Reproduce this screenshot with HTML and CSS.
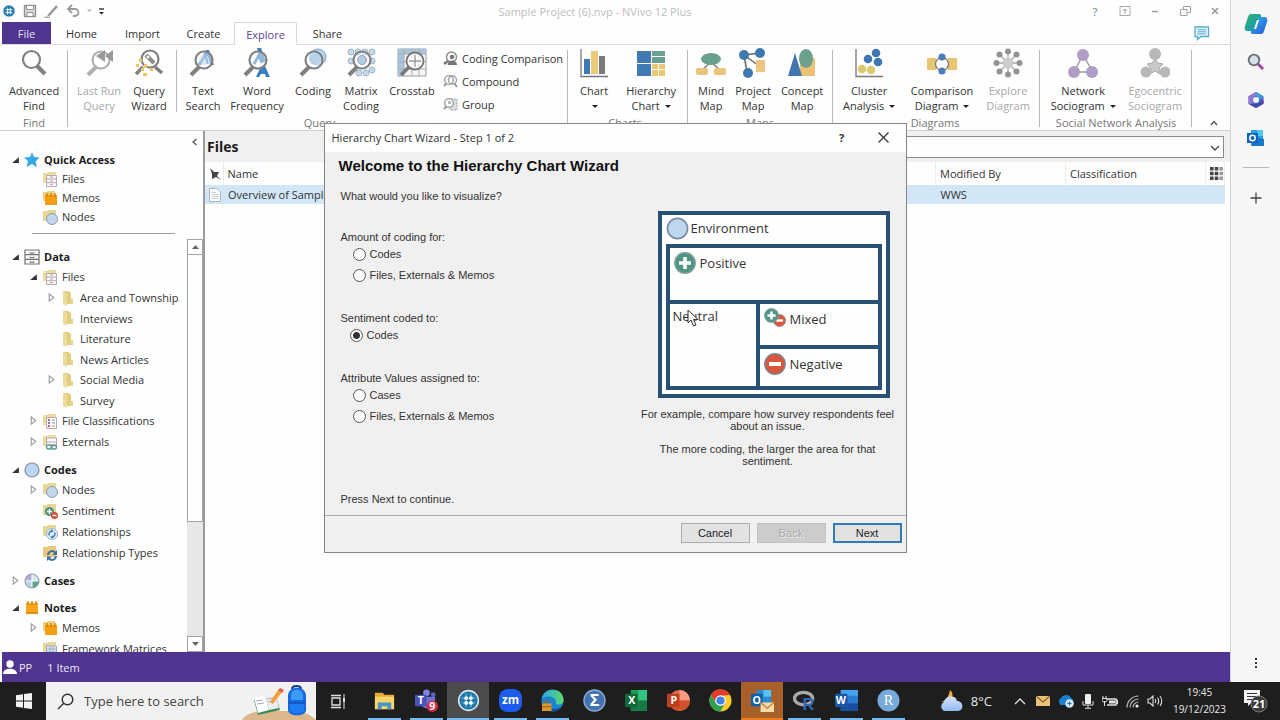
FILE: index.html
```
<!DOCTYPE html>
<html lang="en">
<head>
<meta charset="utf-8">
<title>Sample Project (6).nvp - NVivo 12 Plus</title>
<link rel="stylesheet" href="styles.css">
</head>
<body>
<svg class="sprite" aria-hidden="true">
  <defs>
    <linearGradient id="g-teal" x1="0" y1="0" x2="1" y2="1"><stop offset="0" stop-color="#2fb36a"/><stop offset="1" stop-color="#1593c8"/></linearGradient>
    <linearGradient id="g-blue" x1="0" y1="0" x2="1" y2="1"><stop offset="0" stop-color="#2fc0f0"/><stop offset="1" stop-color="#2a50d8"/></linearGradient>
    <linearGradient id="g-edge" x1="0" y1="0" x2="1" y2="0"><stop offset="0" stop-color="#2ba8e8"/><stop offset="1" stop-color="#5bd86a"/></linearGradient>
    <linearGradient id="g-cloud" x1="0" y1="0" x2="0" y2="1"><stop offset="0" stop-color="#d4e4fb"/><stop offset="1" stop-color="#93b8ee"/></linearGradient>
  </defs>
  <symbol id="lens" viewBox="0 0 30 30"><path d="M18 18 26 26" stroke="#808080" stroke-width="4"/><circle cx="12.500" cy="11.500" r="8.500" fill="none" stroke="#808080" stroke-width="2.200"/></symbol>
  <symbol id="lens-left" viewBox="0 0 30 30"><path d="M11 19 3 27" stroke="#808080" stroke-width="4"/><circle cx="16" cy="12" r="8.500" fill="#fff" fill-opacity=".45" stroke="#808080" stroke-width="2.200"/></symbol>
  <symbol id="caret-open" viewBox="0 0 8 8"><path d="M7 2V7H1Z" fill="#333"/></symbol>
  <symbol id="caret-closed" viewBox="0 0 8 8"><path d="M2 .8 6 4 2 7.200Z" fill="#fff" stroke="#9a9a9a"/></symbol>
  <symbol id="folder" viewBox="0 0 16 16"><path d="M3 1h5l3 2v11H8l-5-1Z" fill="#e2cd7c"/><path d="M3 1l4 2v13l-4-2Z" fill="#ecdc9b"/><path d="M10 9h3v5h-3Z" fill="#e8d58c"/></symbol>
  <symbol id="cabinet" viewBox="0 0 16 16"><path d="M1 1h14v14H1ZM1 5.700h14M1 10.300h14" fill="#fff" stroke="#707070" stroke-width="1.200"/><path d="M6 3v1.200h4V3M6 7.500v1.200h4V7.500M6 12v1.200h4V12" fill="none" stroke="#707070"/></symbol>
  <symbol id="f-cabinet" viewBox="0 0 16 16"><path d="M1 2h4l1-1h8v11H1Z" fill="#eddc9f"/><path d="M4.500 4.500h10v11h-10ZM4.500 8h10M4.500 11.700h10" fill="#faf7f8" stroke="#b7a9b2"/><path d="M8 6h3M8 10h3M8 13.500h3" stroke="#b7a9b2"/></symbol>
  <symbol id="f-class" viewBox="0 0 16 16"><path d="M1 2h4l1-1h8v11H1Z" fill="#eddc9f"/><path d="M4.500 4.500h10v11h-10Z" fill="#fbf8fa" stroke="#b7a9b2"/><path d="M6 7h2M6 13h2" stroke="#c060a0" stroke-width="2"/><path d="M6 10h2" stroke="#52a080" stroke-width="2"/><path d="M10 7h3M10 10h3M10 13h3" stroke="#a89aa8"/></symbol>
  <symbol id="f-ext" viewBox="0 0 16 16"><path d="M1 2h4l1-1h8v11H1Z" fill="#eddc9f"/><path d="M4.500 4h10v8h-10ZM4.500 8h10" fill="#fbf8fa" stroke="#b7a9b2"/><rect x="4.500" y="11" width="5.500" height="4" rx="2" fill="#fff" stroke="#5a9a90" stroke-width="1.300"/><rect x="9" y="11" width="5.500" height="4" rx="2" fill="none" stroke="#5a9a90" stroke-width="1.300"/></symbol>
  <symbol id="pad" viewBox="0 0 16 16"><path d="M2 3h12v11H2Z" fill="#f6a71c"/><path d="M2 12h12v2H2Z" fill="#e28d0a"/><path d="M4 1v4M8 1v4M12 1v4" stroke="#d88a10" stroke-width="1.500"/></symbol>
  <symbol id="f-pad" viewBox="0 0 16 16"><path d="M1 2h4l1-1h7v10H1Z" fill="#f0d07c"/><path d="M3 5h12v10H3Z" fill="#f49f13"/><path d="M5 3v4M9 3v4M13 3v4" stroke="#cf830c" stroke-width="1.400"/></symbol>
  <symbol id="node" viewBox="0 0 16 16"><circle cx="8" cy="8" r="7" fill="#bfd7ee" stroke="#7d8fa6" stroke-width="1.200"/></symbol>
  <symbol id="f-node" viewBox="0 0 16 16"><path d="M1 2h4l1-1h8v11H1Z" fill="#e8d694"/><circle cx="10" cy="10" r="5.500" fill="#c3d7ec" stroke="#8a9cb4"/></symbol>
  <symbol id="f-matrix" viewBox="0 0 16 16"><path d="M1 2h4l1-1h8v11H1Z" fill="#e8d694"/><path d="M4.500 5h10v9h-10ZM4.500 8h10M4.500 11h10M8 5v9M11 5v9" fill="#dbe6f0" stroke="#9fb0c4"/></symbol>
  <symbol id="f-sent" viewBox="0 0 16 16"><path d="M1 2h4l1-1h8v11H1Z" fill="#e8d694"/><circle cx="7.500" cy="8.500" r="4.500" fill="#4f9482"/><path d="M5 8.500h5M7.500 6v5" stroke="#fff" stroke-width="1.400"/><circle cx="12.500" cy="12.500" r="3.500" fill="#d6503c"/><path d="M10.500 12.500h4" stroke="#fff" stroke-width="1.400"/></symbol>
  <symbol id="f-rel" viewBox="0 0 16 16"><path d="M1 2h4l1-1h8v11H1Z" fill="#e8d694"/><circle cx="10" cy="10" r="5.500" fill="#e8f2fa" stroke="#8cb2d2"/><path d="M7.500 11.500a3 3 0 0 1 2-4.500M12.500 8.500a3 3 0 0 1-2 4.500" fill="none" stroke="#3c82b8" stroke-width="1.500"/><path d="M9 5.200l3 1.800-3 1.800ZM11 11.200v3.600L8 13Z" fill="#3c82b8"/></symbol>
  <symbol id="f-relt" viewBox="0 0 16 16"><path d="M1 2h4l1-1h8v11H1Z" fill="#e8c97c"/><path d="M6 10a4 4 0 0 1 7-2.500M14 11a4 4 0 0 1-7 2.500" fill="none" stroke="#3b6ea8" stroke-width="2"/><path d="M15 5v5h-4.500ZM5 16v-4.500h4.500Z" fill="#3b6ea8"/></symbol>
  <symbol id="case" viewBox="0 0 16 16"><circle cx="8" cy="8" r="7" fill="#fff"/><path d="M8 8V1a7 7 0 0 0-7 7Z" fill="#b8acd8"/><path d="M8 8V1a7 7 0 0 1 7 7Z" fill="#d8e6ee"/><path d="M8 8H1a7 7 0 0 0 7 7Z" fill="#b9d2ea"/><path d="M8 8h7a7 7 0 0 1-7 7Z" fill="#5da58c"/><path d="M8 1v14M1 8h14" stroke="#fff"/><circle cx="8" cy="8" r="7" fill="none" stroke="#7d8fa6"/></symbol>
  <symbol id="plus-disc" viewBox="0 0 22 22"><circle cx="11" cy="11" r="10.200" fill="#519684" stroke="#7b9f99" stroke-width="1.400"/><path d="M5 11h12M11 5v12" stroke="#fff" stroke-width="3.600"/></symbol>
  <symbol id="minus-disc" viewBox="0 0 22 22"><circle cx="11" cy="11" r="10.200" fill="#d9583b" stroke="#7d8497" stroke-width="1.400"/><path d="M5 11h12" stroke="#fff" stroke-width="4"/></symbol>
  <symbol id="nvivo" viewBox="0 0 24 24"><circle cx="12" cy="12" r="10.300" fill="#2377a8" stroke="#d3e6f1" stroke-width="1.600"/><path d="M5 9.500h14M5 14.500h14M9.500 5v14M14.500 5v14" stroke="#5bb0dc" stroke-width="1.500"/><g fill="#fff"><circle cx="9.500" cy="9.500" r="2"/><circle cx="14.500" cy="9.500" r="2"/><circle cx="9.500" cy="14.500" r="2"/><circle cx="14.500" cy="14.500" r="2"/></g></symbol>
</svg>

<div class="desktop">
  <div class="app">
    <header class="titlebar">
      <div class="quick">
        <svg width="14" height="14"><use href="#nvivo"/></svg>
        <svg width="14" height="14" viewBox="0 0 14 14"><path d="M1.500 1.500h11v11h-11Z" fill="#ddd" stroke="#929292" stroke-width="1.400"/><path d="M3.500 1.500h7v4h-7ZM4 8.500h6v4H4Z" fill="#fff" stroke="#929292"/></svg>
        <svg width="15" height="14" viewBox="0 0 15 14"><path d="M0 13.300h6" stroke="#9a9a9a"/><path d="M5 11 13 2" stroke="#999" stroke-width="2.600"/><path d="M3 13l1-3 2 1.500Z" fill="#999"/></svg>
        <svg width="14" height="14" viewBox="0 0 14 14"><path d="M2 5h7a3.500 3.500 0 0 1 0 7H7" fill="none" stroke="#999" stroke-width="1.800"/><path d="M6 1 2 5l4 4" fill="none" stroke="#999" stroke-width="1.800"/></svg>
        <svg width="5" height="4" viewBox="0 0 5 4"><path d="M0 .5h5L2.500 3Z" fill="#b5b5b5"/></svg>
        <svg width="5" height="7" viewBox="0 0 5 7"><path d="M0 1h5" stroke="#333" stroke-width="1.400"/><path d="M0 4h5L2.500 6.500Z" fill="#222"/></svg>
      </div>
      <div class="title">Sample Project (6).nvp - NVivo 12 Plus</div>
      <div class="controls">
        <button aria-label="Help">?</button>
        <button aria-label="Ribbon options"><svg width="12" height="10" viewBox="0 0 12 10"><path d="M1 .5h10v9H1ZM6 8V3M4 5l2-2 2 2" fill="none" stroke="#a8a8a8"/></svg></button>
        <button aria-label="Minimise"><svg width="8" height="8" viewBox="0 0 8 8"><path d="M1 4.500h6" stroke="#999" stroke-width="1.400"/></svg></button>
        <button aria-label="Restore"><svg width="11" height="10" viewBox="0 0 11 10"><path d="M.5 3.500h6.500v6H.5ZM3.500 3V.5h7v6H7.500" fill="none" stroke="#a4a4a4"/></svg></button>
        <button aria-label="Close"><svg width="8" height="8" viewBox="0 0 8 8"><path d="M1 1l6 6M7 1 1 7" stroke="#999" stroke-width="1.500"/></svg></button>
      </div>
    </header>

    <nav class="tabs">
      <button class="tab file">File</button>
      <button class="tab">Home</button>
      <button class="tab">Import</button>
      <button class="tab">Create</button>
      <button class="tab active">Explore</button>
      <button class="tab">Share</button>
      <button class="comment" aria-label="Feedback"><svg width="16" height="15" viewBox="0 0 16 15"><path d="M1 1h13.500v9.500H7L3.500 13.500v-3H1Z" fill="#e6f4fa" stroke="#5aa9cc" stroke-width="1.300"/><path d="M3.500 3.700h8.500M3.500 5.800h8.500M3.500 7.900h8.500" stroke="#5aa9cc"/></svg></button>
    </nav>

    <section class="ribbon">
      <div class="group">
        <div class="tools">
          <button class="tool w64"><svg><use href="#lens"/></svg><span>Advanced<br>Find</span></button>
        </div>
        <div class="caption">Find</div>
      </div>
      <div class="group query">
        <div class="tools">
          <button class="tool w52" disabled><svg viewBox="0 0 30 30"><path d="M13 18 4 27" stroke="#b0b0b0" stroke-width="4"/><circle cx="17" cy="12" r="8.500" fill="#fff" stroke="#b0b0b0" stroke-width="2.200"/><path d="M21 2v12l-9-6ZM29 2v12l-8-6Z" fill="#999"/></svg><span>Last Run<br>Query</span></button>
          <button class="tool w48"><svg viewBox="0 0 30 30"><path d="M21 19l7 6M9 19 2 26" stroke="#808080" stroke-width="3.500"/><circle cx="16" cy="11" r="8.500" fill="#fff" stroke="#808080" stroke-width="2.200"/><path d="M12 7l8 8" stroke="#8c8c8c" stroke-width="4"/><path d="M13 8l2 2" stroke="#fff" stroke-width="2"/><g fill="#e7c75e"><path d="M5 11h3v3H5ZM2 16h3v3H2ZM10 16h3v4h-3ZM16 20h3v3h-3ZM9 25h4v3H9ZM7 20h3v3H7Z"/></g></svg><span>Query<br>Wizard</span></button>
          <i class="split"></i>
          <button class="tool w44"><svg viewBox="0 0 30 30"><path d="M9 17 18 2h3l5 15h-4l-1-4h-6l-2 4Z" fill="#3b7fbd"/><circle cx="16" cy="12" r="5" fill="#b9d3ea"/><path d="M12 16 17 7l3 9" fill="none" stroke="#3b7fbd" stroke-width="2"/><use href="#lens-left"/></svg><span>Text<br>Search</span></button>
          <button class="tool w64"><svg viewBox="0 0 30 30"><path d="M15 0h4l5 14h-4Z" fill="#3b7fbd"/><path d="M14 29 19 18h4l5 11h-4l-1-3h-4l-2 3Z" fill="#3b7fbd"/><path d="M12 16 17 7l3 8" fill="none" stroke="#3b7fbd" stroke-width="3"/><use href="#lens-left"/></svg><span>Word<br>Frequency</span></button>
          <button class="tool w48"><svg viewBox="0 0 30 30"><circle cx="20" cy="9" r="8" fill="#bcd4eb" stroke="#7ba6cf"/><use href="#lens-left"/><circle cx="17" cy="11" r="6" fill="#a9c8e5" fill-opacity=".7"/></svg><span>Coding</span></button>
          <button class="tool w48"><svg viewBox="0 0 30 30"><g fill="#c9d9e8" stroke="#9db3ca"><circle cx="5" cy="4" r="3"/><circle cx="12" cy="4" r="3"/><circle cx="19" cy="4" r="3"/><circle cx="26" cy="4" r="3"/><circle cx="5" cy="13" r="3"/><circle cx="26" cy="13" r="3"/><circle cx="13" cy="25" r="3"/><circle cx="20" cy="25" r="3"/><circle cx="26" cy="22" r="3"/></g><use href="#lens-left"/><circle cx="16" cy="12" r="4.500" fill="#b5cce1" stroke="#8aa4bf"/></svg><span>Matrix<br>Coding</span></button>
          <button class="tool w54"><svg viewBox="0 0 30 30"><path d="M1 1h28v27H1Z" fill="#f4f6f7" stroke="#9a9a9a"/><path d="M1 1h6v27H1ZM1 1h28v5H1Z" fill="#a9c4dc"/><path d="M7 1v27M15 1v27M22 1v27M1 6h28M1 14h28M1 21h28" stroke="#a4adb5"/><path d="M12 19 4 27" stroke="#777" stroke-width="3.500"/><circle cx="18" cy="13" r="8.500" fill="#fff" fill-opacity=".8" stroke="#777" stroke-width="1.800"/><path d="M18 7v12M12 13h12" stroke="#777"/></svg><span>Crosstab</span></button>
          <div class="stack">
            <button class="mini"><svg viewBox="0 0 15 15"><path d="M6 9 1 13" stroke="#777" stroke-width="2.400"/><circle cx="8.500" cy="6" r="5" fill="#fff" stroke="#8c8c8c" stroke-width="1.500"/><circle cx="9" cy="6" r="2.300" fill="#777"/><path d="M4.500 14c0-6 9.500-6 9.500 0Z" fill="#777"/></svg>Coding Comparison</button>
            <button class="mini"><svg viewBox="0 0 15 15"><path d="M4 9 1 12" stroke="#999" stroke-width="2"/><path d="M11 9l3 4" stroke="#999" stroke-width="2"/><circle cx="6" cy="6" r="4.300" fill="#fff" stroke="#999" stroke-width="1.300"/><circle cx="9.500" cy="6" r="4" fill="none" stroke="#999" stroke-width="1.300"/></svg>Compound</button>
            <button class="mini"><svg viewBox="0 0 15 15"><path d="M8 2h6v11H7Z" fill="#ddd" stroke="#aaa" stroke-dasharray="2 1"/><path d="M4 9 1 12" stroke="#999" stroke-width="2"/><circle cx="6" cy="6" r="4.300" fill="#fff" stroke="#999" stroke-width="1.300"/><path d="M5 4h3v3H5Z" fill="#bbb"/></svg>Group</button>
          </div>
        </div>
        <div class="caption">Query</div>
      </div>
      <div class="group charts">
        <div class="tools">
          <button class="tool w52"><svg viewBox="0 0 30 30"><path d="M2 1v27.500h27" fill="none" stroke="#777" stroke-width="1.300"/><path d="M5 11h6v15H5Z" fill="#3d7ab5"/><path d="M12 3h7v23h-7Z" fill="#ebcb78"/><path d="M20 8h6v18h-6Z" fill="#7a7a7a"/></svg><span>Chart<br><i class="down"></i></span></button>
          <button class="tool w62"><svg viewBox="0 0 30 30"><path d="M1 3h14v12H1ZM1 16h14v12H1Z" fill="#4179b3"/><path d="M16 3h13v5H16ZM16 9h13v6H16Z" fill="#6aa18d"/><path d="M16 16h6v5h-6ZM23 16h6v5h-6ZM16 22h6v6h-6ZM23 22h6v6h-6Z" fill="#ebc673"/></svg><span>Hierarchy<br>Chart <i class="down"></i></span></button>
        </div>
        <div class="caption">Charts</div>
      </div>
      <div class="group maps">
        <div class="tools">
          <button class="tool w42"><svg viewBox="0 0 30 30"><path d="M15 14 6 22M15 14l9 8" stroke="#777" stroke-width="1.300"/><ellipse cx="15" cy="11" rx="10" ry="6" fill="#69a08d"/><rect x="0" y="20" width="12" height="7" rx="2" fill="#ebc47c"/><rect x="18" y="20" width="12" height="7" rx="2" fill="#ebc47c"/></svg><span>Mind<br>Map</span></button>
          <button class="tool w42"><svg viewBox="0 0 30 30"><path d="M6 7 22 5M6 7l3 17M6 7l15 11" stroke="#666" stroke-width="1.500"/><circle cx="6" cy="7" r="5" fill="#3f78b0"/><circle cx="22" cy="5" r="5" fill="#3f78b0"/><circle cx="10" cy="25" r="5" fill="#3f78b0"/><path d="M18 12h9v12h-9Z" fill="#efc480"/></svg><span>Project<br>Map</span></button>
          <button class="tool w56"><svg viewBox="0 0 30 30"><path d="M13 10h15v18H13Z" fill="#ecc178"/><path d="M8 5 15 28H1Z" fill="#4277ae"/><ellipse cx="19" cy="10.500" rx="7" ry="9.500" fill="#6aa08c"/></svg><span>Concept<br>Map</span></button>
        </div>
        <div class="caption">Maps</div>
      </div>
      <div class="group diagrams">
        <div class="tools">
          <button class="tool w66"><svg viewBox="0 0 30 30"><path d="M2 1v27.500h27" fill="none" stroke="#777" stroke-width="1.300"/><g fill="#3e78b3"><circle cx="22" cy="5" r="4.300"/><circle cx="14" cy="11" r="4.300"/><circle cx="24" cy="14" r="4.300"/></g><g fill="#ddc971"><circle cx="8" cy="21" r="4.300"/><circle cx="17" cy="22" r="4.300"/></g></svg><span>Cluster<br>Analysis <i class="down"></i></span></button>
          <button class="tool w80"><svg viewBox="0 0 30 30"><path d="M0 10h9v12H0ZM21 10h9v12h-9Z" fill="#e8c670"/><circle cx="15" cy="16" r="6.500" fill="#fff" stroke="#777" stroke-width="1.300"/><circle cx="15" cy="9" r="3.500" fill="#4a7cb5"/><circle cx="15" cy="23" r="3.500" fill="#4a7cb5"/></svg><span>Comparison<br>Diagram <i class="down"></i></span></button>
          <button class="tool w52" disabled><svg viewBox="0 0 30 30"><path d="M15 3v24M3 15h24M6.500 6.500l17 17M23.500 6.500l-17 17" stroke="#a6a6a6" stroke-width="1.300"/><circle cx="15" cy="15" r="5.500" fill="#ccc"/><g fill="#929292"><circle cx="15" cy="3.500" r="3"/><circle cx="15" cy="26.500" r="3"/><circle cx="3.500" cy="15" r="3"/><circle cx="26.500" cy="15" r="3"/><circle cx="6.500" cy="6.500" r="3"/><circle cx="23.500" cy="6.500" r="3"/><circle cx="6.500" cy="23.500" r="3"/><circle cx="23.500" cy="23.500" r="3"/></g></svg><span>Explore<br>Diagram</span></button>
        </div>
        <div class="caption">Diagrams</div>
      </div>
      <div class="group social">
        <div class="tools">
          <button class="tool w78"><svg viewBox="0 0 30 30"><path d="M15 7 6 24h19Z" fill="none" stroke="#999" stroke-width="1.400"/><g fill="#b09cc4"><circle cx="15" cy="7" r="6"/><circle cx="6" cy="24" r="6"/><circle cx="24" cy="24" r="6"/></g></svg><span>Network<br>Sociogram <i class="down"></i></span></button>
          <button class="tool w66" disabled><svg viewBox="0 0 30 30"><path d="M15 10l2.500 5 5.500 1-4 4 1 6-5-3-5 3 1-6-4-4 5.500-1Z" fill="#c9c9c9" stroke="#ababab"/><g fill="#b8b8b8"><circle cx="15" cy="6" r="6"/><circle cx="6" cy="24" r="5.500"/><circle cx="25" cy="24" r="5.500"/></g></svg><span>Egocentric<br>Sociogram</span></button>
        </div>
        <div class="caption">Social Network Analysis</div>
      </div>
      <button class="collapse" aria-label="Collapse ribbon"><svg width="8" height="6" viewBox="0 0 8 6"><path d="M1 5l3-3.500L7 5" fill="none" stroke="#555" stroke-width="1.400"/></svg></button>
    </section>

    <main class="work">
      <aside class="nav">
        <div class="pinned">
          <button class="fold" aria-label="Collapse pane"><svg width="5" height="8" viewBox="0 0 5 8"><path d="M4.500 1 1 4l3.500 3" fill="none" stroke="#555" stroke-width="1.300"/></svg></button>
          <div class="head"><svg><use href="#caret-open"/></svg><svg viewBox="0 0 16 16"><path d="M8 0l2 5 5.500.5-4 4 1.500 6L8 12l-5.500 3 1.500-6L0 5.500 6 5Z" fill="#35a8e6"/></svg>Quick Access</div>
          <ul>
            <li class="l2"><i></i><svg><use href="#f-cabinet"/></svg>Files</li>
            <li class="l2"><i></i><svg><use href="#f-pad"/></svg>Memos</li>
            <li class="l2"><i></i><svg><use href="#f-node"/></svg>Nodes</li>
          </ul>
          <hr>
        </div>
        <div class="scroller">
          <div class="tree">
            <div class="head"><svg><use href="#caret-open"/></svg><svg><use href="#cabinet"/></svg>Data</div>
            <ul>
              <li class="l2"><svg><use href="#caret-open"/></svg><svg><use href="#f-cabinet"/></svg>Files</li>
            </ul>
            <ul class="deep">
              <li class="l3"><svg><use href="#caret-closed"/></svg><svg><use href="#folder"/></svg>Area and Township</li>
              <li class="l3"><i></i><svg><use href="#folder"/></svg>Interviews</li>
              <li class="l3"><i></i><svg><use href="#folder"/></svg>Literature</li>
              <li class="l3"><i></i><svg><use href="#folder"/></svg>News Articles</li>
              <li class="l3"><svg><use href="#caret-closed"/></svg><svg><use href="#folder"/></svg>Social Media</li>
              <li class="l3"><i></i><svg><use href="#folder"/></svg>Survey</li>
            </ul>
            <ul>
              <li class="l2"><svg><use href="#caret-closed"/></svg><svg><use href="#f-class"/></svg>File Classifications</li>
              <li class="l2"><svg><use href="#caret-closed"/></svg><svg><use href="#f-ext"/></svg>Externals</li>
            </ul>
            <div class="head"><svg><use href="#caret-open"/></svg><svg><use href="#node"/></svg>Codes</div>
            <ul>
              <li class="l2"><svg><use href="#caret-closed"/></svg><svg><use href="#f-node"/></svg>Nodes</li>
              <li class="l2"><i></i><svg><use href="#f-sent"/></svg>Sentiment</li>
              <li class="l2"><i></i><svg><use href="#f-rel"/></svg>Relationships</li>
              <li class="l2"><i></i><svg><use href="#f-relt"/></svg>Relationship Types</li>
            </ul>
            <div class="head"><svg><use href="#caret-closed"/></svg><svg><use href="#case"/></svg>Cases</div>
            <div class="head"><svg><use href="#caret-open"/></svg><svg><use href="#pad"/></svg>Notes</div>
            <ul>
              <li class="l2"><svg><use href="#caret-closed"/></svg><svg><use href="#f-pad"/></svg>Memos</li>
              <li class="l2"><i></i><svg><use href="#f-matrix"/></svg>Framework Matrices</li>
            </ul>
          </div>
          <div class="scrollbar">
            <button aria-label="Scroll up"><svg width="7" height="4" viewBox="0 0 7 4"><path d="M0 4h7L3.500 0Z" fill="#666"/></svg></button>
            <div class="track"><div class="thumb"></div></div>
            <button aria-label="Scroll down"><svg width="7" height="4" viewBox="0 0 7 4"><path d="M0 0h7L3.500 4Z" fill="#666"/></svg></button>
          </div>
        </div>
      </aside>

      <section class="list">
        <div class="listhead">
          <h1>Files</h1>
          <div class="combo">
            <select aria-label="Search in files"><option></option></select>
            <svg width="10" height="6" viewBox="0 0 10 6"><path d="M1 1l4 4 4-4" fill="none" stroke="#555" stroke-width="1.500"/></svg>
          </div>
        </div>
        <table>
          <colgroup><col class="c-pin"><col><col class="c-by"><col class="c-class"><col class="c-grid"></colgroup>
          <thead>
            <tr>
              <th><svg width="12" height="12" viewBox="0 0 12 12"><path d="M1 0l4 4 5 0-2 4 4 4-5-3-4 2V6Z" fill="#444"/></svg></th>
              <th>Name</th><th>Modified By</th><th>Classification</th>
              <th><svg width="13" height="13" viewBox="0 0 13 13"><path d="M0 0h3.600v3.600H0ZM0 4.700h3.600v3.600H0ZM0 9.400h3.600v3.600H0ZM4.700 0h3.600v3.600H4.700ZM4.700 4.700h3.600v3.600H4.700ZM4.700 9.400h3.600v3.600H4.700Z" fill="#444"/><path d="M9.400 0h3.600v3.600H9.400ZM9.400 4.700h3.600v3.600H9.400ZM9.400 9.400h3.600v3.600H9.400Z" fill="#999"/></svg></th>
            </tr>
          </thead>
          <tbody>
            <tr>
              <td><svg width="12" height="14" viewBox="0 0 12 14"><path d="M.5.500h7.500L11.500 4v9.500H.5Z" fill="#fbfdff" stroke="#a9b5c0"/><path d="M2.500 4.500h5M2.500 6.500h7M2.500 8.500h7M2.500 10.500h7" stroke="#c3ced8"/></svg></td>
              <td>Overview of Sample</td><td>WWS</td><td></td><td></td>
            </tr>
          </tbody>
        </table>
      </section>
    </main>

    <footer class="status">
      <svg width="14" height="14" viewBox="0 0 14 14"><circle cx="7" cy="4" r="3.700" fill="#fff"/><path d="M0 14c0-7 14-7 14 0Z" fill="#fff"/></svg>
      <span>PP</span><span class="count">1 Item</span>
    </footer>

    <section class="dialog" role="dialog" aria-labelledby="dlg-title">
      <div class="dlg-bar">
        <span id="dlg-title">Hierarchy Chart Wizard - Step 1 of 2</span>
        <button aria-label="Help">?</button>
        <button aria-label="Close"><svg width="11" height="11" viewBox="0 0 11 11"><path d="M.5.500l10 10M10.500.500l-10 10" stroke="#333" stroke-width="1.200"/></svg></button>
      </div>
      <div class="dlg-body">
        <form class="choices">
          <h2>Welcome to the Hierarchy Chart Wizard</h2>
          <p class="ask">What would you like to visualize?</p>
          <fieldset>
            <legend>Amount of coding for:</legend>
            <label><input type="radio" name="what">Codes</label>
            <label><input type="radio" name="what">Files, Externals &amp; Memos</label>
          </fieldset>
          <fieldset class="mid">
            <legend>Sentiment coded to:</legend>
            <label><input type="radio" name="what" checked>Codes</label>
          </fieldset>
          <fieldset>
            <legend>Attribute Values assigned to:</legend>
            <label><input type="radio" name="what">Cases</label>
            <label><input type="radio" name="what">Files, Externals &amp; Memos</label>
          </fieldset>
          <p class="press">Press Next to continue.</p>
        </form>
        <div class="example">
          <div class="map">
            <div class="maphead"><svg width="23" height="23"><use href="#node"/></svg>Environment</div>
            <div class="cells">
              <div class="cell pos"><svg width="22" height="22"><use href="#plus-disc"/></svg>Positive</div>
              <div class="cell neu">Neutral
                <svg class="pointer" width="12" height="18" viewBox="0 0 12 18"><path d="M1 1v13l3-3 2.500 6 2.500-1-2.500-5.500h4.500Z" fill="#fff" stroke="#333"/></svg>
              </div>
              <div class="cell mix"><svg width="22" height="20" viewBox="0 0 22 20"><use href="#minus-disc" x="9" y="6" width="13" height="13"/><use href="#plus-disc" x="0" y="0" width="15" height="15"/></svg>Mixed</div>
              <div class="cell neg"><svg width="22" height="22"><use href="#minus-disc"/></svg>Negative</div>
            </div>
          </div>
          <p>For example, compare how survey respondents feel about an issue.</p>
          <p class="narrow">The more coding, the larger the area for that sentiment.</p>
        </div>
      </div>
      <div class="dlg-foot">
        <button>Cancel</button>
        <button disabled>Back</button>
        <button class="primary">Next</button>
      </div>
    </section>
  </div>

  <aside class="side">
    <button aria-label="Copilot"><svg width="24" height="24" viewBox="0 0 24 24"><path d="M7 2h8c2 0 2.500 2 2 4l-3 10c-1 2-2 3-4 3H4c-3 0-4-2-3-5L4 5c.5-2 1.500-3 3-3Z" fill="url(#g-teal)"/><path d="M15 5h5c3 0 4 2 3 5l-3 9c-.5 2-1.500 3-3 3H9c-2 0-2.500-2-2-3 3 0 4-1 5-4Z" fill="url(#g-blue)"/><path d="M13 8h2l-3 9h-2Z" fill="#fff"/></svg></button>
    <button aria-label="Search"><svg width="18" height="18" viewBox="0 0 18 18"><path d="M10 10l6 6" stroke="#a344a8" stroke-width="3"/><circle cx="7" cy="7" r="5.300" fill="#d3e2ea" stroke="#6d6d72" stroke-width="1.800"/></svg></button>
    <button aria-label="Microsoft 365"><svg width="18" height="18" viewBox="0 0 18 18"><path d="M9 1l7.500 4.300v7.400L9 17l-7.500-4.300V5.300Z" fill="#5367c7"/><path d="M9 1l7.500 4.300-4 3L9 5Z" fill="#3ca1dd"/><path d="M9 1v4L5.500 7v7.500L1.500 12.700V5.300Z" fill="#9478d2"/><path d="M1.500 12.700 9 17l7.500-4.300v-4L9 13Z" fill="#4249aa"/><circle cx="9" cy="9" r="3" fill="#f7f7f7"/></svg></button>
    <button aria-label="Outlook"><svg width="18" height="18" viewBox="0 0 18 18"><path d="M4 1h12v16H4Z" fill="#279fe2"/><path d="M10 1h6v6h-6Z" fill="#53c7f3"/><path d="M5 8l12 2v7H5Z" fill="#1878c8"/><rect x="0" y="4" width="11" height="10" fill="#0c64b8"/><circle cx="5.500" cy="9" r="2.700" fill="none" stroke="#fff" stroke-width="1.500"/></svg></button>
    <hr>
    <button aria-label="Add"><svg width="12" height="12" viewBox="0 0 12 12"><path d="M6 .5v11M.5 6h11" stroke="#444" stroke-width="1.300"/></svg></button>
    <button class="more" aria-label="More"><svg width="4" height="12" viewBox="0 0 4 12"><path d="M1 1h2v2H1ZM1 5h2v2H1ZM1 9h2v2H1Z" fill="#333"/></svg></button>
  </aside>
</div>

<footer class="taskbar">
  <button class="start" aria-label="Start"><svg width="16" height="16" viewBox="0 0 16 16"><path d="M0 2.200 7 1.200v6.300H0ZM8 1l8-1v7.500H8ZM0 8.500h7v6.300l-7-1ZM8 8.500h8V16l-8-1Z" fill="#f2f2f2"/></svg></button>
  <label class="search">
    <svg width="17" height="17" viewBox="0 0 17 17"><circle cx="10.500" cy="6.500" r="5.300" fill="none" stroke="#333" stroke-width="1.400"/><path d="M6.500 10.500 1 16" stroke="#333" stroke-width="1.400"/></svg>
    <input type="text" placeholder="Type here to search" aria-label="Search">
    <svg class="art" width="74" height="36" viewBox="0 0 74 36"><path d="M0 36c2-5 10-8 20-9h36c9 2 14 5 18 9Z" fill="#dcb78c"/><path d="M12 16l22-4 4 14-22 5Z" fill="#3d8a5a"/><path d="M12 14l11-2 4 14-11 3Z" fill="#fff"/><path d="M23 12l11-1 3 13-10 2Z" fill="#ececf0"/><path d="M14 17l7-1M15 20l7-1M25 15l7-1M26 18l7-1" stroke="#aab"/><path d="M28 18 36 6l4 2-9 12Z" fill="#f1a13c"/><path d="M36 6l2-2 4 2-2 3Z" fill="#e0604c"/><path d="M50 5c0-4 9-4 9 0" fill="none" stroke="#123f94" stroke-width="2"/><path d="M46 12c0-11 18-11 18 0v14c0 7-18 7-18 0Z" fill="#1668df"/><path d="M49 11c0-7 12-7 12 0v5H49Z" fill="#3b9cf6"/><path d="M48 19h14v8c-3 3-11 3-14 0Z" fill="#1e7df0"/><path d="M47 19h16" stroke="#0f3f9c"/></svg>
  </label>
  <button class="view" aria-label="Task view"><svg width="16" height="15" viewBox="0 0 16 15"><path d="M1 1.500h10M1 13.500h10M2 4h8v7H2Z" fill="none" stroke="#e0e0e0" stroke-width="1.300"/><path d="M14 0v15" stroke="#e0e0e0"/><path d="M13 4h2v4h-2Z" fill="#e0e0e0"/></svg></button>
  <button class="task run" aria-label="File Explorer"><svg viewBox="0 0 24 24"><path d="M2 4h8l2 2h10v15H2Z" fill="#e5a93a"/><path d="M2 8h20v13H2Z" fill="#f8d568"/><path d="M5 21v-7h14v7h-4v-3H9v3Z" fill="#4795cf"/></svg></button>
  <button class="task run" aria-label="Teams"><svg viewBox="0 0 24 24"><circle cx="12" cy="4" r="3.500" fill="#7b83eb"/><circle cx="19" cy="6" r="2.500" fill="#5b62c4"/><path d="M7 8h14v8c0 6-14 6-14 0Z" fill="#6a70d4"/><rect x="0" y="6" width="12" height="12" rx="1" fill="#4a51b5"/><text x="6" y="16" class="ltr s11">T</text><circle cx="18" cy="18" r="6" fill="#d42a45"/><text x="18" y="22" class="ltr s11">9</text></svg></button>
  <button class="task current" aria-label="NVivo"><svg viewBox="0 0 24 24"><use href="#nvivo"/></svg></button>
  <button class="task run" aria-label="Zoom"><svg viewBox="0 0 24 24"><rect x="0" y="0" width="24" height="24" rx="9" fill="#1c5cf0"/><text x="12" y="16" class="ltr s12">zm</text></svg></button>
  <button class="task run" aria-label="Edge"><svg viewBox="0 0 24 24"><circle cx="12" cy="12" r="11.500" fill="#1c83cf"/><path d="M1 10C3-3 24-2 23.500 12c0 5-9 6-8 1 0-5-9-7-14.500-3Z" fill="url(#g-edge)"/><path d="M7 14c0 7 8 9 15 4-3 5-10 7-15 4Z" fill="#174c9c"/><path d="M1 15h10v8H1Z" fill="#dc962f"/><path d="M4 15v-2h4v2M1 18.500h10" fill="none" stroke="#9a6118"/></svg></button>
  <button class="task" aria-label="SPSS"><svg viewBox="0 0 24 24"><circle cx="12" cy="12" r="11" fill="#4473b3" stroke="#8eabd3" stroke-width="1.400"/><text x="12" y="18" class="ltr s17">Σ</text></svg></button>
  <button class="task" aria-label="Excel"><svg viewBox="0 0 24 24"><path d="M6 1h17v22H6Z" fill="#1f9b5a"/><path d="M14 1h9v11h-9Z" fill="#33c481"/><path d="M6 12h17v11H6Z" fill="#187a45"/><rect x="0" y="5" width="13" height="14" rx="1" fill="#13683a"/><text x="7" y="16" class="ltr s11">X</text></svg></button>
  <button class="task" aria-label="PowerPoint"><svg viewBox="0 0 24 24"><circle cx="13" cy="12" r="11" fill="#e8694b"/><path d="M13 1a11 11 0 0 1 11 11H13Z" fill="#f79b80"/><path d="M2 12h22a11 11 0 0 1-22 0Z" fill="#d4502f"/><rect x="0" y="5" width="13" height="14" rx="1" fill="#c03e20"/><text x="7" y="16" class="ltr s11">P</text></svg></button>
  <button class="task" aria-label="Chrome"><svg viewBox="0 0 24 24"><circle cx="12" cy="12" r="11.500" fill="#fac92c"/><path d="M2 6.200A11.500 11.500 0 0 1 22 6.200L12 7 7 14Z" fill="#e23b2e"/><path d="M2 6.200A11.500 11.500 0 0 0 12 23.500L17 14l-10 .5Z" fill="#2fa14f"/><circle cx="12" cy="12" r="5.500" fill="#fff"/><circle cx="12" cy="12" r="4.300" fill="#3f82ee"/></svg></button>
  <button class="task alert" aria-label="Outlook"><svg viewBox="0 0 24 24"><path d="M6 1h15v17H6Z" fill="#2b8ad0"/><path d="M13 1h8v7h-8Z" fill="#55c2f0"/><rect x="0" y="5" width="12" height="13" rx="1" fill="#0f5fa8"/><text x="6" y="16" class="ltr s11">O</text><path d="M10 14h14v10H10Z" fill="#f3d9a6"/><path d="M10 14l7 6 7-6" fill="none" stroke="#b9803e" stroke-width="1.300"/></svg></button>
  <button class="task run" aria-label="R"><svg viewBox="0 0 24 24"><ellipse cx="11" cy="10" rx="9.500" ry="6.500" fill="none" stroke="#a9a9ad" stroke-width="3.500"/><text x="16" y="22" class="rr">R</text></svg></button>
  <button class="task run" aria-label="Word"><svg viewBox="0 0 24 24"><path d="M6 1h18v22H6Z" fill="#2a7bd1"/><path d="M6 1h18v6H6Z" fill="#43a3ee"/><path d="M6 15h18v8H6Z" fill="#174f9e"/><rect x="0" y="5" width="13" height="14" rx="1" fill="#1b55a8"/><text x="6" y="16" class="ltr s11">W</text></svg></button>
  <button class="task run" aria-label="RStudio"><svg viewBox="0 0 24 24"><circle cx="12" cy="12" r="11.500" fill="#75aadb"/><text x="12" y="17" class="rs">R</text></svg></button>
  <div class="tray">
    <svg width="24" height="24" viewBox="0 0 24 24"><path d="M11 1c4 3 3 9-1 12H2c5-1 8-6 9-12Z" fill="#f3ae3d"/><path d="M5 22a5 5 0 0 1 0-9c2-7 12-7 13-1 7 0 7 10 1 10Z" fill="url(#g-cloud)"/></svg>
    <span class="temp">8°C</span>
    <svg class="up" width="12" height="8" viewBox="0 0 12 8"><path d="M1 7l5-5 5 5" fill="none" stroke="#ddd" stroke-width="1.400"/></svg>
    <svg width="14" height="10" viewBox="0 0 14 10"><path d="M0 0h14v10H0Z" fill="#eac27a"/><path d="M0 0l7 6 7-6" fill="none" stroke="#7c5a22" stroke-width="1.200"/></svg>
    <svg width="16" height="14" viewBox="0 0 16 14"><path d="M3 11a4 4 0 0 1 0-7c2-4 9-4 10 0 2 1 3 4 2 7Z" fill="#1c7fd0"/><circle cx="11.500" cy="9.500" r="4.300" fill="#cfe6f6"/><path d="M9.500 9.500h4M11.500 7.500v4" stroke="#1c6cb0"/></svg>
    <svg width="12" height="15" viewBox="0 0 12 15"><rect x="3" y="0" width="6" height="10" rx="1" fill="#eee"/><path d="M1 7v4h10V7M6 11v3M3 14.300h6" fill="none" stroke="#ddd"/></svg>
    <svg width="16" height="11" viewBox="0 0 16 11"><path d="M5 3h9v6H5M14.500 4.500h1v3h-1" fill="none" stroke="#e4e4e4" stroke-width="1.300"/><path d="M7 4.500h6v3H7Z" fill="#e4e4e4"/><path d="M1 0v2M4 0v2M0 2.500h5v2c0 2-5 2-5 0ZM2.500 5v5" fill="none" stroke="#e4e4e4"/></svg>
    <svg width="13" height="13" viewBox="0 0 13 13"><g fill="none" stroke="#bbb" stroke-width="1.200"><path d="M1 12.500A11.500 11.500 0 0 1 12.500 1M4 12.500A8.500 8.500 0 0 1 12.500 4M7 12.500A5.500 5.500 0 0 1 12.500 7"/></g><circle cx="11" cy="11" r="1.600" fill="#eee"/></svg>
    <svg width="16" height="12" viewBox="0 0 16 12"><path d="M1 4h2l3-3v10L3 8H1Z" fill="none" stroke="#ddd" stroke-width="1.100"/><path d="M8 4q1.500 2 0 4M10.500 2.500q2.500 3.500 0 7M13 1q3.500 5 0 10" fill="none" stroke="#ddd" stroke-width="1.100"/></svg>
    <time>19:45<br>19/12/2023</time>
    <svg class="note" width="24" height="24" viewBox="0 0 24 24"><path d="M0 1h16v13H7l-3 3v-3H0Z" fill="#f2f2f2"/><path d="M3 4.500h10M3 7.500h10M3 10.500h6" stroke="#333" stroke-width="1.200"/><circle cx="15" cy="15" r="8" fill="#3a3a3a" stroke="#777"/><text x="15" y="19" class="ltr s11">21</text></svg>
  </div>
</footer>
</body>
</html>
```
FILE: styles.css
```
* { box-sizing: border-box; }
body {
  margin: 0;
  height: 100vh;
  display: flex;
  flex-direction: column;
  overflow: hidden;
  font: 11px/15px "Open Sans", "Noto Sans", sans-serif;
  color: #333;
  background: #fefefe;
}
button {
  font: inherit;
  color: inherit;
  background: none;
  border: 0;
  padding: 0;
  margin: 0;
}
ul { list-style: none; margin: 0; padding: 0; }
svg { display: block; flex: none; }
.sprite { position: absolute; width: 0; height: 0; }

.desktop { flex: 1; min-height: 0; display: flex; }
.app { flex: 1; min-width: 0; display: flex; flex-direction: column; position: relative; }

/* Title bar */
.titlebar { display: flex; align-items: center; height: 22px; }
.quick { display: flex; align-items: center; gap: 7px; padding-left: 2px; width: 110px; }
.title { flex: 1; text-align: center; color: #bdbdbd; }
.controls { display: flex; }
.controls button { width: 30px; height: 22px; display: flex; align-items: center; justify-content: center; color: #999; font-weight: 600; }

/* Tabs */
.tabs { display: flex; height: 22px; padding-left: 2px; }
.tab { width: 61px; height: 22px; border: 1px solid transparent; border-bottom: 0; }
.tab.file { width: 49px; background: #4f3590; color: #e6e0f2; }
.tab.active { width: 63px; height: 23px; background: #fefefe; border-color: #d9d9d9; color: #5a4490; position: relative; z-index: 1; }
.comment { margin-left: auto; margin-right: 20px; display: flex; align-items: center; }

/* Ribbon */
.ribbon { display: flex; height: 87px; padding-left: 2px; border-top: 1px solid #dcdcdc; border-bottom: 1px solid #cfcfcf; }
.group { display: flex; flex-direction: column; padding: 3px 1px 0 0; border-right: 1px solid transparent; border-image: linear-gradient(transparent 6px, #b9b9b9 6px, #b9b9b9 81px, transparent 81px) 1; }
.group.query { padding-left: 5px; }
.group.charts { padding-right: 5px; }
.group.maps { padding: 3px 2px 0; }
.group.diagrams { padding: 3px 5px 0 3px; }
.group.social { padding: 3px 3px 0 4px; }
.tools { display: flex; height: 67px; }
.tool { display: flex; flex-direction: column; align-items: center; gap: 5px; white-space: nowrap; }
.tool svg { width: 30px; height: 30px; }
.tool:disabled { color: #a8a8a8; }
.tool span { display: block; }
.w42 { width: 42px; }
.w44 { width: 44px; }
.w48 { width: 48px; }
.w52 { width: 52px; }
.w54 { width: 54px; }
.w56 { width: 56px; }
.w62 { width: 62px; }
.w64 { width: 64px; }
.w66 { width: 66px; }
.w78 { width: 78px; }
.w80 { width: 80px; }
.split { width: 1px; height: 62px; margin: 2px 4px 0 3px; background: #b9b9b9; }
.down { display: inline-block; border: 3px solid transparent; border-top-color: #222; border-bottom: 0; margin: 0 0 2px 2px; }
.stack { display: flex; flex-direction: column; gap: 3px; padding: 0 3px 0 4px; }
.mini { display: flex; align-items: center; gap: 4px; height: 20px; white-space: nowrap; }
.mini svg { width: 15px; height: 15px; }
.caption { text-align: center; color: #777; white-space: nowrap; }
.collapse { margin: auto 12px 4px auto; }

/* Workspace */
.work { flex: 1; min-height: 0; display: flex; }
.nav { width: 205px; display: flex; flex-direction: column; border-right: 2px solid #9b9b9f; }
.pinned { position: relative; padding-top: 19px; }
.pinned .l2 { height: 19px; }
.pinned hr { height: 1px; border: 0; margin: 7px 28px 5px 32px; background: #9c9c9c; }
.fold { position: absolute; top: 7px; right: 6px; }
.scroller { flex: 1; min-height: 0; display: flex; }
.tree { flex: 1; overflow: hidden; }
.tree .head { margin-top: 8px; }
.head, .l2, .l3 { display: flex; align-items: center; gap: 4px; height: 21px; white-space: nowrap; }
.head { height: 19px; padding-left: 11px; font-weight: 700; color: #1c1c1c; }
.l2 { padding-left: 29px; }
.l3 { padding-left: 47px; }
.deep .l3:nth-child(even) { height: 20px; }
.head svg, .l2 svg, .l3 svg { width: 16px; height: 16px; }
.head > :first-child, .l2 > :first-child, .l3 > :first-child { width: 9px; height: 9px; }
.scrollbar { width: 16px; display: flex; flex-direction: column; }
.scrollbar button { height: 16px; border: 1px solid #a3a3a3; display: flex; align-items: center; justify-content: center; }
.track { flex: 1; background: #e7e7e7; }
.thumb { height: 70%; background: #fefefe; border: 1px solid #a3a3a3; border-top: 0; }

.list { flex: 1; min-width: 0; }
.listhead { display: flex; align-items: center; height: 31px; gap: 90px; padding: 0 6px 0 2px; background: #f0f0f0; }
.listhead h1 { margin: 0; font-size: 14px; line-height: 20px; color: #1c1c1c; }
.combo { flex: 1; position: relative; }
.combo select { display: block; width: 100%; height: 22px; appearance: none; background: #fefefe; border: 1px solid #8a8a8a; border-radius: 0; }
.combo svg { position: absolute; right: 4px; top: 9px; pointer-events: none; }
table { width: calc(100% - 5px); table-layout: fixed; border-collapse: collapse; }
.c-pin { width: 18px; }
.c-by { width: 130px; }
.c-class { width: 140px; }
.c-grid { width: 19px; }
th, td { padding: 0 0 0 4px; text-align: left; font-weight: 400; white-space: nowrap; }
th { height: 23px; border-right: 1px solid #ececec; }
td { height: 19px; background: #d2e6f8; }
td + td { padding-left: 5px; }

/* Status bar */
.status { display: flex; align-items: center; gap: 2px; height: 30px; padding-left: 1px; margin-left: 2px; background: #4f3590; color: #ece8f5; }
.count { margin-left: 13px; }

/* Wizard window */
.dialog { position: absolute; top: 123px; left: 0; right: 0; margin: 0 auto; width: 583px; border: 1px solid #85858a; background: #f0f0f0; font: 11px/13px "Liberation Sans", Arial, sans-serif; }
.dlg-bar { display: flex; align-items: center; height: 28px; padding: 0 8px 2px 7px; background: #fefefe; font: 11px/15px "Open Sans", "Noto Sans", sans-serif; }
.dlg-bar span { flex: 1; }
.dlg-bar button { width: 28px; display: flex; justify-content: center; font-weight: 700; margin-left: 14px; }
.dlg-body { display: flex; justify-content: space-between; padding: 4px 10px 0 14px; min-height: 363px; }
.choices { flex: 1; min-width: 0; }
.choices h2 { margin: 0; font-size: 15px; line-height: 20px; color: #111; white-space: nowrap; }
.ask { margin: 14px 0 28px 2px; }
fieldset { border: 0; margin: 0 0 26px 2px; padding: 0; min-width: 0; }
legend { padding: 0; }
fieldset label { display: flex; align-items: center; gap: 4px; height: 21px; padding-left: 12px; }
fieldset.mid label { padding-left: 9px; }
input[type="radio"] { appearance: none; width: 13px; height: 13px; margin: 0; border: 1px solid #555; border-radius: 50%; background: #fff; }
input[type="radio"]:checked { background: radial-gradient(#333 0 3px, #fff 4px); }
.press { margin: 66px 0 0 2px; }
.example { width: 256px; padding-top: 55px; text-align: center; }
.map { width: 232px; height: 187px; margin: 0 6px 10px auto; display: flex; flex-direction: column; border: 4px solid #284f74; background: #fefefe; font: 13px/18px "Open Sans", "Noto Sans", sans-serif; padding: 0 4px 4px; text-align: left; }
.maphead { display: flex; align-items: center; gap: 2px; height: 29px; padding-bottom: 3px; }
.cells { flex: 1; display: grid; grid-template: 52px 41px 1fr / 86px 1fr; gap: 4px; padding: 4px; background: #284f74; }
.cell { display: flex; align-items: flex-start; gap: 4px; padding: 4px; background: #fefefe; line-height: 22px; }
.pos { grid-column: 1 / 3; }
.neu { grid-row: 2 / 4; position: relative; padding: 1px 3px; }
.pointer { position: absolute; left: 17px; top: 5px; }
.example p { margin: 0 0 11px; line-height: 12px; }
.example .narrow { padding: 0 10px; }
.dlg-foot { display: flex; justify-content: flex-end; gap: 7px; padding: 7px 4px 9px; border-top: 1px solid #a9a9a9; }
.dlg-foot button { width: 69px; height: 20px; background: #e2e2e2; border: 1px solid #adadad; color: #222; }
.dlg-foot button:disabled { background: #cccccc; border-color: #c2c2c2; color: #aaa; text-shadow: 1px 1px #eee; }
.dlg-foot .primary { border: 2px solid #2f7bb5; }

/* Browser side strip */
.side { width: 50px; display: flex; flex-direction: column; align-items: center; background: #f7f7f8; border-left: 1px solid #d3d3d8; padding-top: 5px; }
.side button { height: 38px; display: flex; align-items: center; }
.side hr { width: 26px; height: 1px; border: 0; background: #b8b8b8; margin: 10px 0 11px; }
.side .more { margin-top: auto; }

/* Taskbar */
.taskbar { display: flex; height: 38px; background: #1e1e1e; color: #e8e8e8; }
.start { width: 44px; margin-left: 2px; display: flex; align-items: center; justify-content: center; }
.search { width: 270px; display: flex; align-items: center; gap: 10px; padding-left: 11px; background: #f1f1f1; }
.search input { flex: 1; min-width: 0; border: 0; padding: 0; background: none; font: 13px/18px "Open Sans", "Noto Sans", sans-serif; }
.search input::placeholder { color: #444; opacity: 1; }
.art { align-self: flex-end; }
.view { width: 47px; padding-right: 3px; display: flex; align-items: center; justify-content: center; }
.task { width: 42px; display: flex; align-items: center; justify-content: center; border-bottom: 2px solid transparent; }
.task svg { width: 23px; height: 23px; }
.task.run { background: linear-gradient(#76b9ed, #76b9ed) center bottom / 33px 2px no-repeat border-box; }
.task.current { background: #4b4b4b; border-color: #76b9ed; }
.task.alert { background: #a7602a; border-color: #f07a1c; }
.tray { flex: 1; display: flex; align-items: center; justify-content: flex-end; gap: 8px; padding-right: 12px; }
.temp { font-size: 13px; margin-right: 14px; }
.up { margin-right: 2px; }
.tray time { font-size: 10px; line-height: 17px; text-align: center; margin: 0 10px 0 2px; }
.ltr { fill: #fff; font-family: "Open Sans", sans-serif; font-weight: 700; text-anchor: middle; }
.s11 { font-size: 11px; }
.s12 { font-size: 12px; }
.s17 { font-size: 17px; }
.rr { fill: #2f66b5; font: 700 17px "Liberation Sans", sans-serif; text-anchor: middle; }
.rs { fill: #fff; font: 15px "Liberation Serif", serif; text-anchor: middle; }
```
